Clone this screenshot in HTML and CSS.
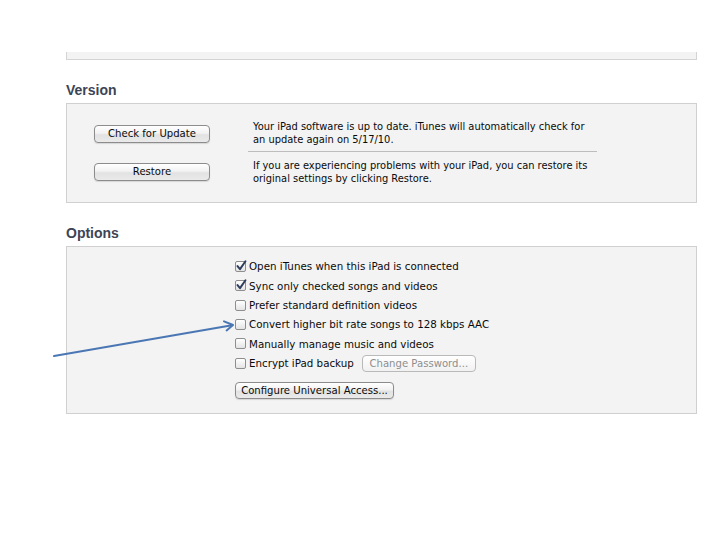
FILE: index.html
```html
<!DOCTYPE html>
<html>
<head>
<meta charset="utf-8">
<link rel="stylesheet" href="styles.css">
</head>
<body>
<div class="page">
  <div class="stub"></div>

  <h2 class="heading version-heading">Version</h2>
  <div class="box version-box">
    <div class="vrow">
      <div class="vbtn-col first"><button class="btn">Check for Update</button></div>
      <div class="vtext first">Your iPad software is up to date. iTunes will automatically check for an update again on 5/17/10.</div>
    </div>
    <div class="vrow">
      <div class="vbtn-col second"><button class="btn">Restore</button></div>
      <div class="vtext second">If you are experiencing problems with your iPad, you can restore its original settings by clicking Restore.</div>
    </div>
  </div>

  <h2 class="heading options-heading">Options</h2>
  <div class="box options-box">
    <div class="opts">
      <div class="opt"><span class="cb checked"><svg viewBox="0 0 11 11"><path d="M2.3 5.6 L4.6 8.4 L9.6 1.2" /></svg></span><span class="lbl">Open iTunes when this iPad is connected</span></div>
      <div class="opt"><span class="cb checked"><svg viewBox="0 0 11 11"><path d="M2.3 5.6 L4.6 8.4 L9.6 1.2" /></svg></span><span class="lbl">Sync only checked songs and videos</span></div>
      <div class="opt"><span class="cb"></span><span class="lbl">Prefer standard definition videos</span></div>
      <div class="opt"><span class="cb"></span><span class="lbl">Convert higher bit rate songs to 128 kbps AAC</span></div>
      <div class="opt"><span class="cb"></span><span class="lbl">Manually manage music and videos</span></div>
      <div class="opt"><span class="cb"></span><span class="lbl">Encrypt iPad backup</span><button class="btn small disabled">Change Password...</button></div>
      <button class="btn config">Configure Universal Access...</button>
    </div>
  </div>
</div>

<svg class="arrow" width="720" height="540" viewBox="0 0 720 540">
  <line x1="54" y1="356" x2="232" y2="325.2" />
  <polyline points="224,321.3 233,325 226.6,330.4" />
</svg>
</body>
</html>
```

FILE: styles.css
```css
html, body {
  margin: 0;
  padding: 0;
  background: #ffffff;
}

.page {
  width: 631px;
  padding: 0 23px 0 66px;
  font-family: "DejaVu Sans", sans-serif;
  font-size: 10.3px;
  color: #0a0a0a;
}

.stub {
  margin-top: 52px;
  height: 7px;
  background: #f3f3f3;
  border: 1px solid #d4d4d4;
  border-top: none;
}

.heading {
  margin: 22px 0 5px 0;
  font-family: "Liberation Sans", Arial, sans-serif;
  font-weight: bold;
  font-size: 14px;
  line-height: 16px;
  color: #3c4456;
}

.box {
  background: #f3f3f3;
  border: 1px solid #d0d0d0;
}

.vrow {
  display: flex;
  align-items: flex-start;
}

.vbtn-col {
  width: 116px;
  margin-left: 27px;
  margin-right: 38px;
}

.vbtn-col.first { padding-top: 21px; }
.vbtn-col.second { padding-top: 11px; }

.vbtn-col .btn {
  width: 116px;
}

.vtext {
  width: 344px;
  padding-left: 5px;
  font-size: 9.9px;
  line-height: 13px;
}

.vtext.first {
  padding-top: 16px;
  padding-bottom: 5px;
  border-bottom: 1px solid #bdbdbd;
}

.vtext.second {
  padding-top: 7px;
  padding-bottom: 17px;
}

.btn {
  display: block;
  box-sizing: border-box;
  height: 18px;
  padding: 0 6px;
  font-family: "DejaVu Sans", sans-serif;
  font-size: 10.1px;
  color: #0a0a0a;
  background: linear-gradient(#ffffff, #f2f2f2 45%, #e2e2e2 55%, #eaeaea);
  border: 1px solid #8c8c8c;
  border-radius: 4px;
  box-shadow: 0 1px 1px rgba(0,0,0,0.12);
  line-height: 16px;
  text-align: center;
  white-space: nowrap;
}

.opts {
  margin-left: 168px;
  padding-top: 9.6px;
  padding-bottom: 13.7px;
}

.opt {
  display: flex;
  align-items: center;
  height: 19.4px;
}

.cb {
  box-sizing: border-box;
  width: 11px;
  height: 11px;
  margin-right: 3px;
  border: 1px solid #8e8e8e;
  border-radius: 2px;
  background: linear-gradient(#ffffff, #e4e4e4);
  position: relative;
  flex: none;
}

.cb svg {
  position: absolute;
  left: -1px;
  top: -2px;
  width: 12px;
  height: 12px;
  overflow: visible;
}

.cb svg path {
  fill: none;
  stroke: #2f3d5c;
  stroke-width: 1.8;
  stroke-linecap: round;
  stroke-linejoin: round;
}

.btn.small {
  width: 114px;
  height: 17.4px;
  line-height: 15px;
  margin-left: 8px;
}

.btn.disabled {
  color: #8e8e8e;
  border-color: #b9b9b9;
  box-shadow: none;
  background: linear-gradient(#ffffff, #f1f1f1);
}

.btn.config {
  width: 159px;
  height: 17px;
  line-height: 15px;
  margin-top: 9.3px;
  padding: 0 4px;
}

.arrow {
  position: absolute;
  left: 0;
  top: 0;
  pointer-events: none;
}

.arrow line, .arrow polyline {
  fill: none;
  stroke: #4a77b4;
  stroke-width: 2;
  stroke-linecap: round;
  stroke-linejoin: round;
}
```
